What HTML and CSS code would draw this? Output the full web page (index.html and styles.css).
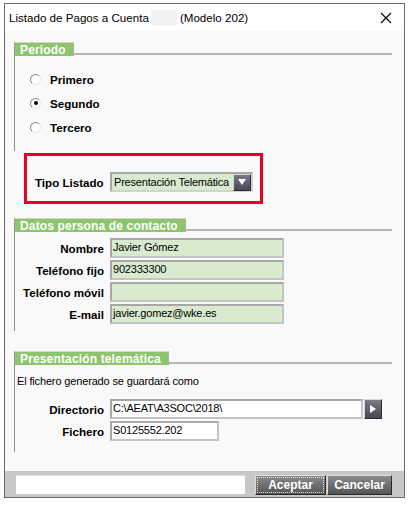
FILE: index.html
```html
<!DOCTYPE html>
<html lang="es">
<head>
<meta charset="utf-8">
<title>Listado de Pagos a Cuenta (Modelo 202)</title>
<link rel="stylesheet" href="styles.css">
</head>
<body>
<div class="window">
  <div class="titlebar">
    <span class="title">Listado de Pagos a Cuenta</span>
    <span class="title-blank"></span>
    <span class="title">(Modelo 202)</span>
    <span class="title-fill"></span>
    <svg class="close" width="12" height="12" viewBox="0 0 12 12"><path d="M1 1 L11 11 M11 1 L1 11" stroke="#000" stroke-width="1.1" fill="none"/></svg>
  </div>

  <div class="content">
    <section class="group group-periodo">
      <div class="group-head"><span class="tab">Periodo</span><span class="rule"></span></div>
      <div class="group-body radios">
        <div class="radio-row"><span class="radio"></span><span class="label">Primero</span></div>
        <div class="radio-row"><span class="radio checked"></span><span class="label">Segundo</span></div>
        <div class="radio-row"><span class="radio"></span><span class="label">Tercero</span></div>
      </div>
    </section>

    <div class="highlight">
      <span class="label">Tipo Listado</span>
      <div class="select">
        <span class="select-text">Presentación Telemática</span>
        <span class="dd-btn"><svg width="10" height="8" viewBox="0 0 10 8"><path d="M1 1 L9 1 L5 7 Z" fill="#fff"/></svg></span>
      </div>
    </div>

    <section class="group group-datos">
      <div class="group-head"><span class="tab">Datos persona de contacto</span><span class="rule"></span></div>
      <div class="group-body form-grid">
        <span class="label">Nombre</span><span class="field green">Javier Gómez</span>
        <span class="label">Teléfono fijo</span><span class="field green">902333300</span>
        <span class="label">Teléfono móvil</span><span class="field green"></span>
        <span class="label">E-mail</span><span class="field green">javier.gomez@wke.es</span>
      </div>
    </section>

    <section class="group group-tele">
      <div class="group-head"><span class="tab">Presentación telemática</span><span class="rule"></span></div>
      <div class="group-body tele-body">
        <p class="note">El fichero generado se guardará como</p>
        <div class="form-grid tele-grid">
          <span class="label">Directorio</span>
          <div class="dir-row"><span class="field white dir">C:\AEAT\A3SOC\2018\</span><span class="arrow-btn"><svg width="8" height="10" viewBox="0 0 8 10"><path d="M1 1 L7 5 L1 9 Z" fill="#fff"/></svg></span></div>
          <span class="label">Fichero</span>
          <div class="dir-row"><span class="field white file">S0125552.202</span></div>
        </div>
      </div>
    </section>
  </div>

  <div class="footer">
    <span class="status"></span>
    <button class="btn focused"><span>Aceptar</span></button>
    <button class="btn"><span>Cancelar</span></button>
  </div>
</div>
</body>
</html>
```

FILE: styles.css
```css
* { box-sizing: border-box; }
html, body { margin: 0; padding: 0; background: #fff; }
body { font-family: "Liberation Sans", Arial, sans-serif; color: #000; }

.window {
  margin: 3px 0 0 4px;
  width: 401px;
  height: 495px;
  border: 1px solid #6a6a6a;
  display: flex;
  flex-direction: column;
  background: #f9f9f9;
}

.titlebar {
  height: 27px;
  background: #fff;
  display: flex;
  align-items: center;
  padding: 0 12px 0 4px;
  font-size: 11.6px;
  color: #000;
}
.title { white-space: nowrap; }
.title-blank { width: 26px; height: 15px; background: #f2f2f2; margin: 0 3px 0 2px; }
.title-fill { flex: 1; }
.close { display: block; }

.content {
  flex: 1;
  padding: 11px 12px 0 9px;
}

.group-head { display: flex; align-items: flex-end; height: 14px; }
.tab {
  height: 14px;
  line-height: 14px;
  background: #8dc46e;
  color: #fff;
  font-weight: bold;
  font-size: 12px;
  letter-spacing: 0.15px;
  padding: 0 7px 0 5px;
  border-top: 1px solid #d4d4d4;
  border-left: 1px solid #9a9a9a;
  border-right: 1px solid #b0b0b0;
  white-space: nowrap;
}
.rule { flex: 1; height: 2px; background: #b6b6b6; margin-bottom: 1px; }
.group-body { border-left: 1px solid #8e8e8e; }

.label { font-weight: bold; font-size: 11.6px; white-space: nowrap; }

.radios { padding: 11px 0 12px 15px; }
.radio-row { height: 24px; display: flex; align-items: center; }
.radio {
  width: 11px; height: 11px;
  border-radius: 50%;
  border: 1px solid;
  border-color: #8a8a8a #e6e6e6 #e6e6e6 #8a8a8a;
  background: #fff;
  margin-right: 9px;
  display: flex; align-items: center; justify-content: center;
}
.radio.checked::after {
  content: "";
  width: 4px; height: 4px; border-radius: 50%; background: #000;
}

.highlight {
  margin: 2px 0 0 10px;
  width: 239px;
  height: 51px;
  border: 3px solid #e5002a;
  display: flex;
  align-items: center;
  padding: 7px 0 0 8px;
}
.highlight .label { width: 75px; }
.select {
  width: 143px; height: 20px;
  display: flex; align-items: center;
  background: #d8ebcf;
  border: 2px solid;
  border-color: #a6a6a6 #d2d2d2 #d2d2d2 #a6a6a6;
  padding-left: 2px;
}
.select-text { flex: 1; font-size: 11px; letter-spacing: -0.2px; white-space: nowrap; overflow: hidden; }
.dd-btn, .arrow-btn {
  width: 18px; height: 17px;
  display: flex; align-items: center; justify-content: center;
  background: linear-gradient(#7a7886, #4a4856);
  border: 1px solid;
  border-color: #d6d6d6 #2c2c2c #2c2c2c #d6d6d6;
}
.dd-btn svg, .arrow-btn svg { display: block; }

.group-datos { margin-top: 14px; }
.form-grid {
  display: grid;
  grid-template-columns: 89px auto;
  column-gap: 6px;
  row-gap: 2px;
  align-items: center;
  justify-items: start;
}
.form-grid .label { justify-self: end; }
.group-datos .form-grid { padding: 6px 0 7px 0; }
.field {
  height: 20px;
  border: 2px solid;
  border-color: #a8a8a8 #c4c4c4 #c4c4c4 #a8a8a8;
  font-size: 11px;
  letter-spacing: -0.2px;
  line-height: 15px;
  padding-left: 1px;
  white-space: nowrap;
  display: block;
}
.field.green { background: #d8ebcf; width: 174px; }
.field.white { background: #fff; }

.group-tele { margin-top: 20px; }
.tele-body { padding: 9px 0 11px 0; }
.note { margin: 0 0 11px 2px; font-size: 11px; letter-spacing: -0.15px; line-height: 14px; }
.tele-grid { padding: 0; }
.dir-row { display: flex; align-items: stretch; }
.field.dir { width: 253px; }
.field.file { width: 109px; }
.arrow-btn { height: 20px; margin-left: 1px; }

.footer {
  height: 26px;
  background: #c8c8c8;
  display: flex;
  align-items: flex-start;
  padding: 4px 0 0 11px;
}
.status { width: 229px; height: 19px; background: #fff; border-top: 1px solid #dadada; }
.btn {
  height: 20px;
  margin: 0;
  padding: 1px;
  font-family: "Liberation Sans", Arial, sans-serif;
  font-weight: bold;
  font-size: 12px;
  color: #fff;
  background: linear-gradient(#8a8a8a, #555);
  border: 1px solid;
  border-color: #dcdcdc #2a2a2a #2a2a2a #dcdcdc;
  display: flex; align-items: center; justify-content: center;
}
.btn span { display: flex; align-items: center; justify-content: center; width: 100%; height: 100%; border: 1px dotted transparent; }
.btn.focused { width: 71px; margin-left: 10px; }
.btn.focused span { border-color: #e0e0e0; }
.btn + .btn { width: 65px; margin-left: 1px; }
```
